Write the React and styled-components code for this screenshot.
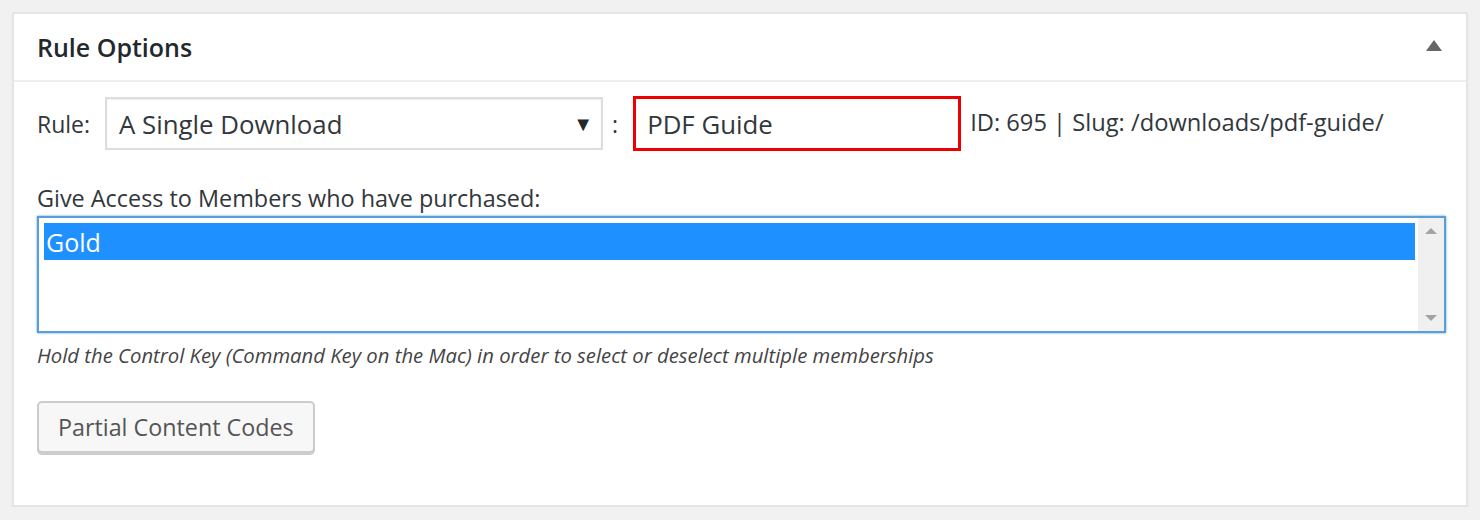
import styled, { createGlobalStyle } from "styled-components";

const GlobalStyle = createGlobalStyle`
    html, body {
        margin : 0;
        padding : 0;
        background : #f1f1f1;
        font-family : "Open Sans", "Noto Sans", sans-serif;
        color : #23282d;
    }
`

const Page = styled.div`
    padding : 12px 12px 0 12px;
`
const Postbox = styled.div`
    background : #fff;
    border : 2px solid #e5e5e5;
    box-shadow : 0 1px 2px rgba(0, 0, 0, 0.05);
`
const Header = styled.div`
    height : 66px;
    display : flex;
    align-items : center;
    justify-content : space-between;
    padding : 0 24px 0 23px;
    border-bottom : 2px solid #eee;
`
const Title = styled.h2`
    margin : 0;
    font-size : 25px;
    font-weight : 600;
    color : #23282d;
`
const Toggle = styled.span`
    width : 0; height : 0;
    border-left : 8px solid transparent;
    border-right : 8px solid transparent;
    border-bottom : 11px solid #666;
    margin-top : -4px;
`
const Inside = styled.div`
    padding : 13px 22px 52px 23px;
`
const RuleRow = styled.div`
    display : flex;
    align-items : center;
    height : 57px;
`
const Label = styled.span`
    font-size : 23px;
    color : #32373c;
    margin-right : ${p => p.gap || 0}px;
`
const SelectBox = styled.div`
    width : 474px;
    height : 49px;
    border : 2px solid #ddd;
    display : flex;
    align-items : center;
    justify-content : space-between;
    padding : 0 8px 0 12px;
    box-sizing : content-box;
    box-shadow : inset 0 1px 2px rgba(0, 0, 0, 0.07);
    font-size : 25.8px;
    color : #32373c;
`
const Caret = styled.span`
    font-size : 20px;
    color : #23282d;
`
const Colon = styled.span`
    font-size : 23px;
    margin : 0 15px 0 9px;
    color : #32373c;
`
const TextInput = styled.div`
    width : 328px;
    height : 55px;
    box-sizing : border-box;
    border : 3px solid #e00;
    display : flex;
    align-items : center;
    padding-left : 11px;
    font-size : 25.8px;
    color : #32373c;
`
const Meta = styled.span`
    font-size : 23.7px;
    color : #32373c;
    margin-left : 9px;
    margin-top : -4px;
`
const FieldLabel = styled.div`
    font-size : 23.4px;
    color : #32373c;
    margin-top : 30px;
    line-height : 32px;
`
const ListBox = styled.div`
    margin-top : 2px;
    height : 113px;
    width : 1405px;
    border : 2px solid #5b9dd9;
    box-shadow : 0 0 2px rgba(30, 140, 190, 0.8);
    display : flex;
`
const Options = styled.div`
    flex : 1;
    padding : 5px 3px 0 5px;
`
const Option = styled.div`
    height : 37px;
    display : flex;
    align-items : center;
    padding-left : 2px;
    font-size : 25px;
    background : ${p => (p.selected ? "#1e90ff" : "transparent")};
    color : ${p => (p.selected ? "#fff" : "#32373c")};
`
const Scrollbar = styled.div`
    width : 26px;
    background : #f0f0f0;
    display : flex;
    flex-direction : column;
    justify-content : space-between;
    align-items : center;
    padding : 10px 0;
`
const Arrow = styled.span`
    width : 0; height : 0;
    border-left : 6px solid transparent;
    border-right : 6px solid transparent;
    ${p => p.up ? "border-bottom" : "border-top"} : 6px solid #a3a3a3;
`
const Hint = styled.p`
    margin : 8px 0 0 0;
    font-size : 20.3px;
    line-height : 28px;
    font-style : italic;
    color : #444;
`
const Button = styled.button`
    margin-top : 32px;
    height : 52px;
    padding : 0 19px;
    font-family : inherit;
    font-size : 23.3px;
    color : #555;
    background : #f7f7f7;
    border : 2px solid #ccc;
    border-radius : 5px;
    box-shadow : 0 2px 0 #ccc;
    cursor : pointer;
`

function App(){
    return (
        <>
            <GlobalStyle />
            <Page>
                <Postbox>
                    <Header>
                        <Title>Rule Options</Title>
                        <Toggle />
                    </Header>
                    <Inside>
                        <RuleRow>
                            <Label gap={15}>Rule:</Label>
                            <SelectBox>
                                A Single Download
                                <Caret>▼</Caret>
                            </SelectBox>
                            <Colon>:</Colon>
                            <TextInput>PDF Guide</TextInput>
                            <Meta>ID: 695 | Slug: /downloads/pdf-guide/</Meta>
                        </RuleRow>
                        <FieldLabel>Give Access to Members who have purchased:</FieldLabel>
                        <ListBox>
                            <Options>
                                <Option selected>Gold</Option>
                            </Options>
                            <Scrollbar>
                                <Arrow up />
                                <Arrow />
                            </Scrollbar>
                        </ListBox>
                        <Hint>Hold the Control Key (Command Key on the Mac) in order to select or deselect multiple memberships</Hint>
                        <Button>Partial Content Codes</Button>
                    </Inside>
                </Postbox>
            </Page>
        </>
    )
}
export default App;
